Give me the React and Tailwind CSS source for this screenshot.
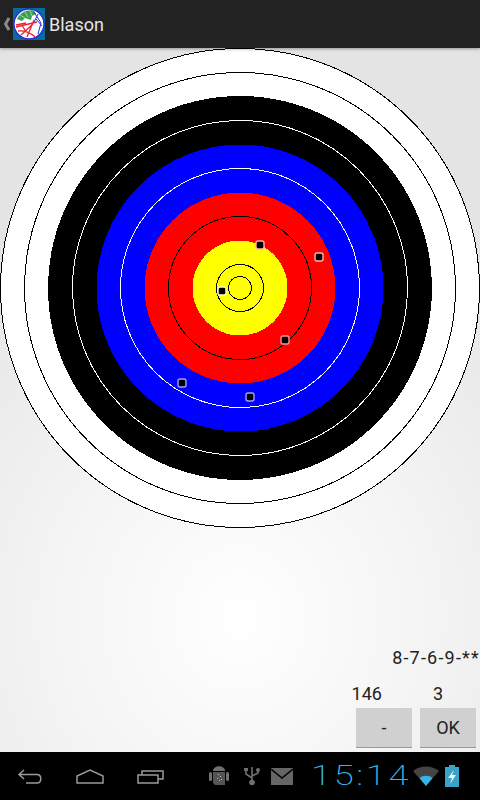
const rings = [
  { r: 239.5, fill: '#ffffff', stroke: '#000000' },
  { r: 215.5, fill: '#ffffff', stroke: '#000000' },
  { r: 192, fill: '#000000', stroke: 'none' },
  { r: 167.5, fill: '#000000', stroke: '#ffffff' },
  { r: 143.5, fill: '#0000ff', stroke: 'none' },
  { r: 119.5, fill: '#0000ff', stroke: '#ffffff' },
  { r: 95.5, fill: '#ff0000', stroke: 'none' },
  { r: 71.5, fill: '#ff0000', stroke: '#000000' },
  { r: 47.5, fill: '#ffff00', stroke: 'none' },
  { r: 23.5, fill: '#ffff00', stroke: '#000000' },
  { r: 11.5, fill: '#ffff00', stroke: '#000000' },
];

const hits = [
  { x: 260, y: 245, c: '#ffb0b0' },
  { x: 319, y: 257, c: '#ffb0b0' },
  { x: 222, y: 291, c: '#ffffc0' },
  { x: 285, y: 340, c: '#ff9090' },
  { x: 182, y: 383, c: '#a0a0ff' },
  { x: 250, y: 397, c: '#a0a0ff' },
];

function Target() {
  return (
    <svg width="480" height="480" viewBox="0 48 480 480" className="block">
      {rings.map((ring) => (
        <circle key={ring.r} cx="240" cy="288" r={ring.r} fill={ring.fill} stroke={ring.stroke} strokeWidth="1" shapeRendering="crispEdges" />
      ))}
      {hits.map((h) => (
        <rect key={h.x} x={h.x - 4} y={h.y - 4} width="8" height="8" rx="2" fill="#000000" stroke={h.c} strokeWidth="1.4" />
      ))}
    </svg>
  );
}

function AppIcon() {
  return (
    <svg width="32" height="32" viewBox="0 0 32 32" className="shrink-0">
      <rect width="32" height="32" fill="#0a6ba0" />
      <circle cx="16" cy="16" r="15" fill="#ffffff" stroke="#2030e0" strokeWidth="1.4" />
      <path d="M4 11 C7 5 13 1.5 21 2.5 L23 6 L19 8 L18 12 L12 10 L9 13 Z" fill="#3aa050" />
      <path d="M7 7 L12 10 M12 4 L15 9 M17 3 L19 8" stroke="#b8e0c0" strokeWidth="0.8" fill="none" />
      <path d="M3 19 L24 14 M3 17 L13 15 M8 27 L20 16 M14 29 L21 12 M5 23 C11 22 18 25 22 29 M9 17 L13 24" stroke="#f02030" strokeWidth="1.3" fill="none" />
      <path d="M21 4 L28 15 L25 26 M23 11 L29 18 M25 6 L21 14" stroke="#2030e0" strokeWidth="1" fill="none" />
    </svg>
  );
}

function ActionBar() {
  return (
    <div className="relative z-10 flex h-12 shrink-0 items-center bg-[#222222] shadow-[0_1px_3px_rgba(0,0,0,0.35)]">
      <svg width="13" height="16" viewBox="0 0 13 16" className="shrink-0">
        <path d="M9 2 L5.5 8 L9 14" stroke="#8a8a8a" strokeWidth="3" fill="none" />
      </svg>
      <AppIcon />
      <span className="ml-1 mt-[2px] text-lg text-[#e6e6e6]">Blason</span>
    </div>
  );
}

function ScorePanel() {
  return (
    <div className="flex flex-1 flex-col items-end justify-end pb-1 pr-1 text-lg text-[#222222]">
      <div className="-mr-1 mb-[16px] leading-[20px] tracking-[1.2px]">8-7-6-9-**</div>
      <div className="mb-[4px] flex w-full justify-end leading-[20px]">
        <span className="mr-[51px]">146</span>
        <span className="mr-[33px]">3</span>
      </div>
      <div className="flex gap-2">
        <button className="h-10 w-14 border-b border-[#9a9a9a] bg-[#d0d0d0] text-lg text-[#222222]">-</button>
        <button className="h-10 w-14 border-b border-[#9a9a9a] bg-[#d0d0d0] text-lg text-[#222222]">OK</button>
      </div>
    </div>
  );
}

function StatusBar() {
  return (
    <div className="flex h-12 shrink-0 items-center bg-black">
      <div className="ml-[17px] flex items-center gap-[35px]">
        <svg width="26" height="16" viewBox="0 0 26 16">
          <path d="M7 2 L2 6.5 L7 11 M2 6.5 H20 C25 6.5 25 15 20 15 H9" stroke="#9a9a9a" strokeWidth="1.5" fill="none" />
        </svg>
        <svg width="28" height="15" viewBox="0 0 28 15" className="-ml-[2px]">
          <path d="M1 14 V7 L14 1 L27 7 V14 Z" stroke="#9a9a9a" strokeWidth="1.5" fill="none" />
        </svg>
        <svg width="27" height="15" viewBox="0 0 27 15" className="-ml-[2px]">
          <path d="M1 6 H21 V14 H1 Z M5 6 V2 H26 V10 H21" stroke="#9a9a9a" strokeWidth="1.5" fill="none" />
        </svg>
      </div>
      <div className="ml-[45px] flex items-center">
        <svg width="20" height="22" viewBox="0 0 20 22">
          <rect x="0" y="7" width="3" height="9" rx="1.5" fill="#707070" />
          <rect x="17" y="7" width="3" height="9" rx="1.5" fill="#707070" />
          <path d="M4 6 C4 -0.5 16 -0.5 16 6 Z" fill="#707070" />
          <path d="M4 7 H16 V20 H6 L4 18 Z" fill="#555555" />
          <path d="M9 9 h1 v1 h-1 z M11 11 h1 v1 h-1 z M8 13 h1 v1 h-1 z M10 15 h1 v1 h-1 z M12 14 h1 v1 h-1 z" fill="#bbbbbb" />
        </svg>
        <svg width="16" height="20" viewBox="0 0 16 20" className="ml-[15px]">
          <path d="M8 1 V16 M8 12 L2 8 V4 M8 10 L14 7 V4" stroke="#707070" strokeWidth="1.6" fill="none" />
          <circle cx="8" cy="16.5" r="2.8" fill="#707070" />
          <rect x="0" y="2" width="4" height="3" fill="#707070" />
          <circle cx="14" cy="4" r="2" fill="#707070" />
        </svg>
        <svg width="22" height="17" viewBox="0 0 22 17" className="ml-[11px]">
          <rect width="22" height="17" fill="#666666" />
          <path d="M0 1 L11 10 L22 1" stroke="#000000" strokeWidth="1.4" fill="none" />
        </svg>
      </div>
      <span className="ml-[18px] inline-block origin-left scale-x-[1.3] font-extralight text-[28px] leading-none tracking-[2px] text-[#33b5e5]">15:14</span>
      <div className="ml-[25px] flex items-center gap-[6px]">
        <svg width="26" height="20" viewBox="0 0 26 20">
          <path d="M0 5 C7 -1 19 -1 26 5 L13 20 Z" fill="#444444" />
          <path d="M6.5 12 C10 9 16 9 19.5 12 L13 20 Z" fill="#33b5e5" />
        </svg>
        <svg width="14" height="22" viewBox="0 0 14 22">
          <rect x="4" y="0" width="6" height="3" fill="#3aa3c8" />
          <rect x="0" y="2" width="14" height="20" fill="#3aa3c8" />
          <path d="M9 5 L3 13 H7 L5 19 L11 10 H7 Z" fill="#e8f6fb" />
        </svg>
      </div>
    </div>
  );
}

export default function App() {
  return (
    <div className="flex h-[800px] w-[480px] flex-col overflow-hidden font-['Roboto',sans-serif]">
      <ActionBar />
      <div className="flex flex-1 flex-col bg-[radial-gradient(ellipse_420px_460px_at_240px_570px,#ffffff_0%,#f4f4f4_45%,#e4e4e4_100%)]">
        <Target />
        <ScorePanel />
      </div>
      <StatusBar />
    </div>
  );
}
